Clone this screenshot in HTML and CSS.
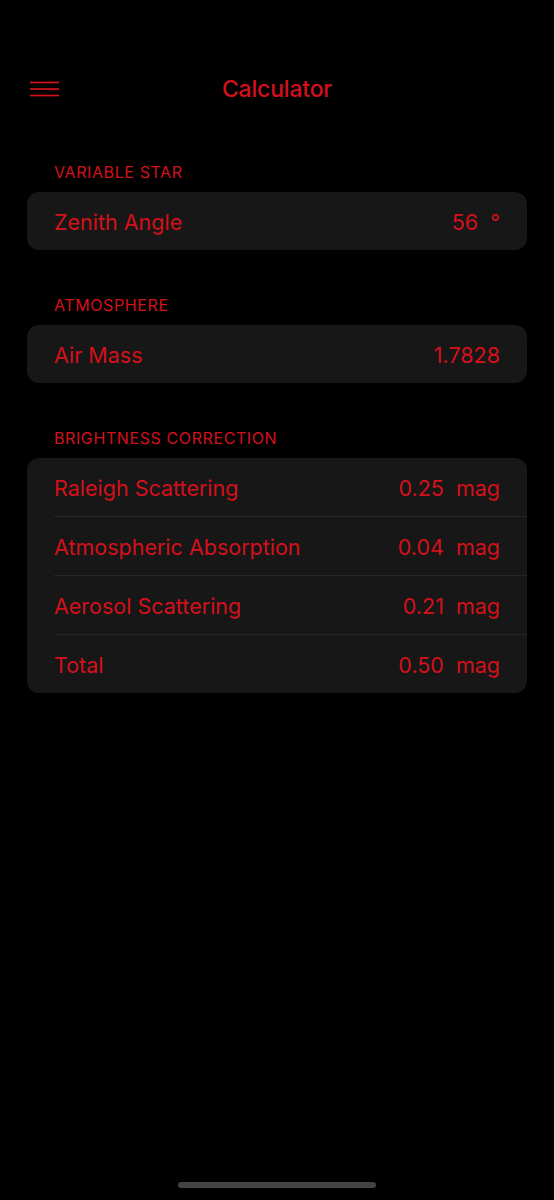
FILE: index.html
```html
<!DOCTYPE html>
<html>
<head>
<meta charset="utf-8">
<link rel="stylesheet" href="styles.css">
</head>
<body>
<div class="screen">
  <header class="nav">
    <button class="menu" aria-label="Menu">
      <svg width="29" height="16" viewBox="0 0 29 16"><g stroke="#d4111b" stroke-width="1.7"><line x1="0" y1="1.5" x2="29" y2="1.5"/><line x1="0" y1="8" x2="29" y2="8"/><line x1="0" y1="14.5" x2="29" y2="14.5"/></g></svg>
    </button>
    <h1 class="title">Calculator</h1>
  </header>

  <main class="content">
    <section class="group">
      <h2 class="group-label">VARIABLE STAR</h2>
      <div class="card">
        <div class="row"><span class="name">Zenith Angle</span><span class="value"><span>56</span><span class="unit">°</span></span></div>
      </div>
    </section>

    <section class="group">
      <h2 class="group-label">ATMOSPHERE</h2>
      <div class="card">
        <div class="row"><span class="name">Air Mass</span><span class="value"><span>1.7828</span></span></div>
      </div>
    </section>

    <section class="group">
      <h2 class="group-label">BRIGHTNESS CORRECTION</h2>
      <div class="card">
        <div class="row"><span class="name">Raleigh Scattering</span><span class="value"><span>0.25</span><span class="unit">mag</span></span></div>
        <div class="row"><span class="name">Atmospheric Absorption</span><span class="value"><span>0.04</span><span class="unit">mag</span></span></div>
        <div class="row"><span class="name">Aerosol Scattering</span><span class="value"><span>0.21</span><span class="unit">mag</span></span></div>
        <div class="row"><span class="name">Total</span><span class="value"><span>0.50</span><span class="unit">mag</span></span></div>
      </div>
    </section>
  </main>

  <div class="home-indicator"></div>
</div>
</body>
</html>
```

FILE: styles.css
```css
* { box-sizing: border-box; }
html, body {
  margin: 0;
  padding: 0;
  background: #000;
}
body {
  font-family: Inter, "Liberation Sans", sans-serif;
  color: #d4111b;
}
.screen {
  width: 554px;
  height: 1200px;
  display: flex;
  flex-direction: column;
  position: relative;
}
.nav {
  height: 48px;
  margin-top: 64px;
  display: flex;
  align-items: center;
  justify-content: center;
  position: relative;
}
.menu {
  position: absolute;
  left: 30px;
  top: 16.5px;
  padding: 0;
  border: 0;
  background: none;
  width: 29px;
  height: 16px;
  display: block;
}
.menu svg { display: block; }
.title {
  margin: 0;
  font-size: 23px;
  font-weight: 500;
  letter-spacing: -0.2px;
  padding-top: 1px;
}
.content {
  padding: 0 27px;
  display: flex;
  flex-direction: column;
  gap: 45px;
  margin-top: 50px;
}
.group-label {
  margin: 0 0 10px 27px;
  font-size: 16px;
  font-weight: 400;
  line-height: 20px;
  letter-spacing: 0.6px;
}
.card {
  background: #171717;
  border-radius: 12px;
  overflow: hidden;
}
.row {
  height: 59px;
  margin-left: 27px;
  padding-right: 27px;
  padding-top: 2px;
  display: flex;
  align-items: center;
  justify-content: space-between;
  font-size: 21.5px;
  border-top: 1px solid #262626;
}
.row:first-child { border-top: 0; height: 58px; }
.value {
  display: flex;
  gap: 12px;
}
.home-indicator {
  position: absolute;
  left: 178px;
  top: 1182px;
  width: 198px;
  height: 6px;
  border-radius: 3px;
  background: #434343;
}
```
